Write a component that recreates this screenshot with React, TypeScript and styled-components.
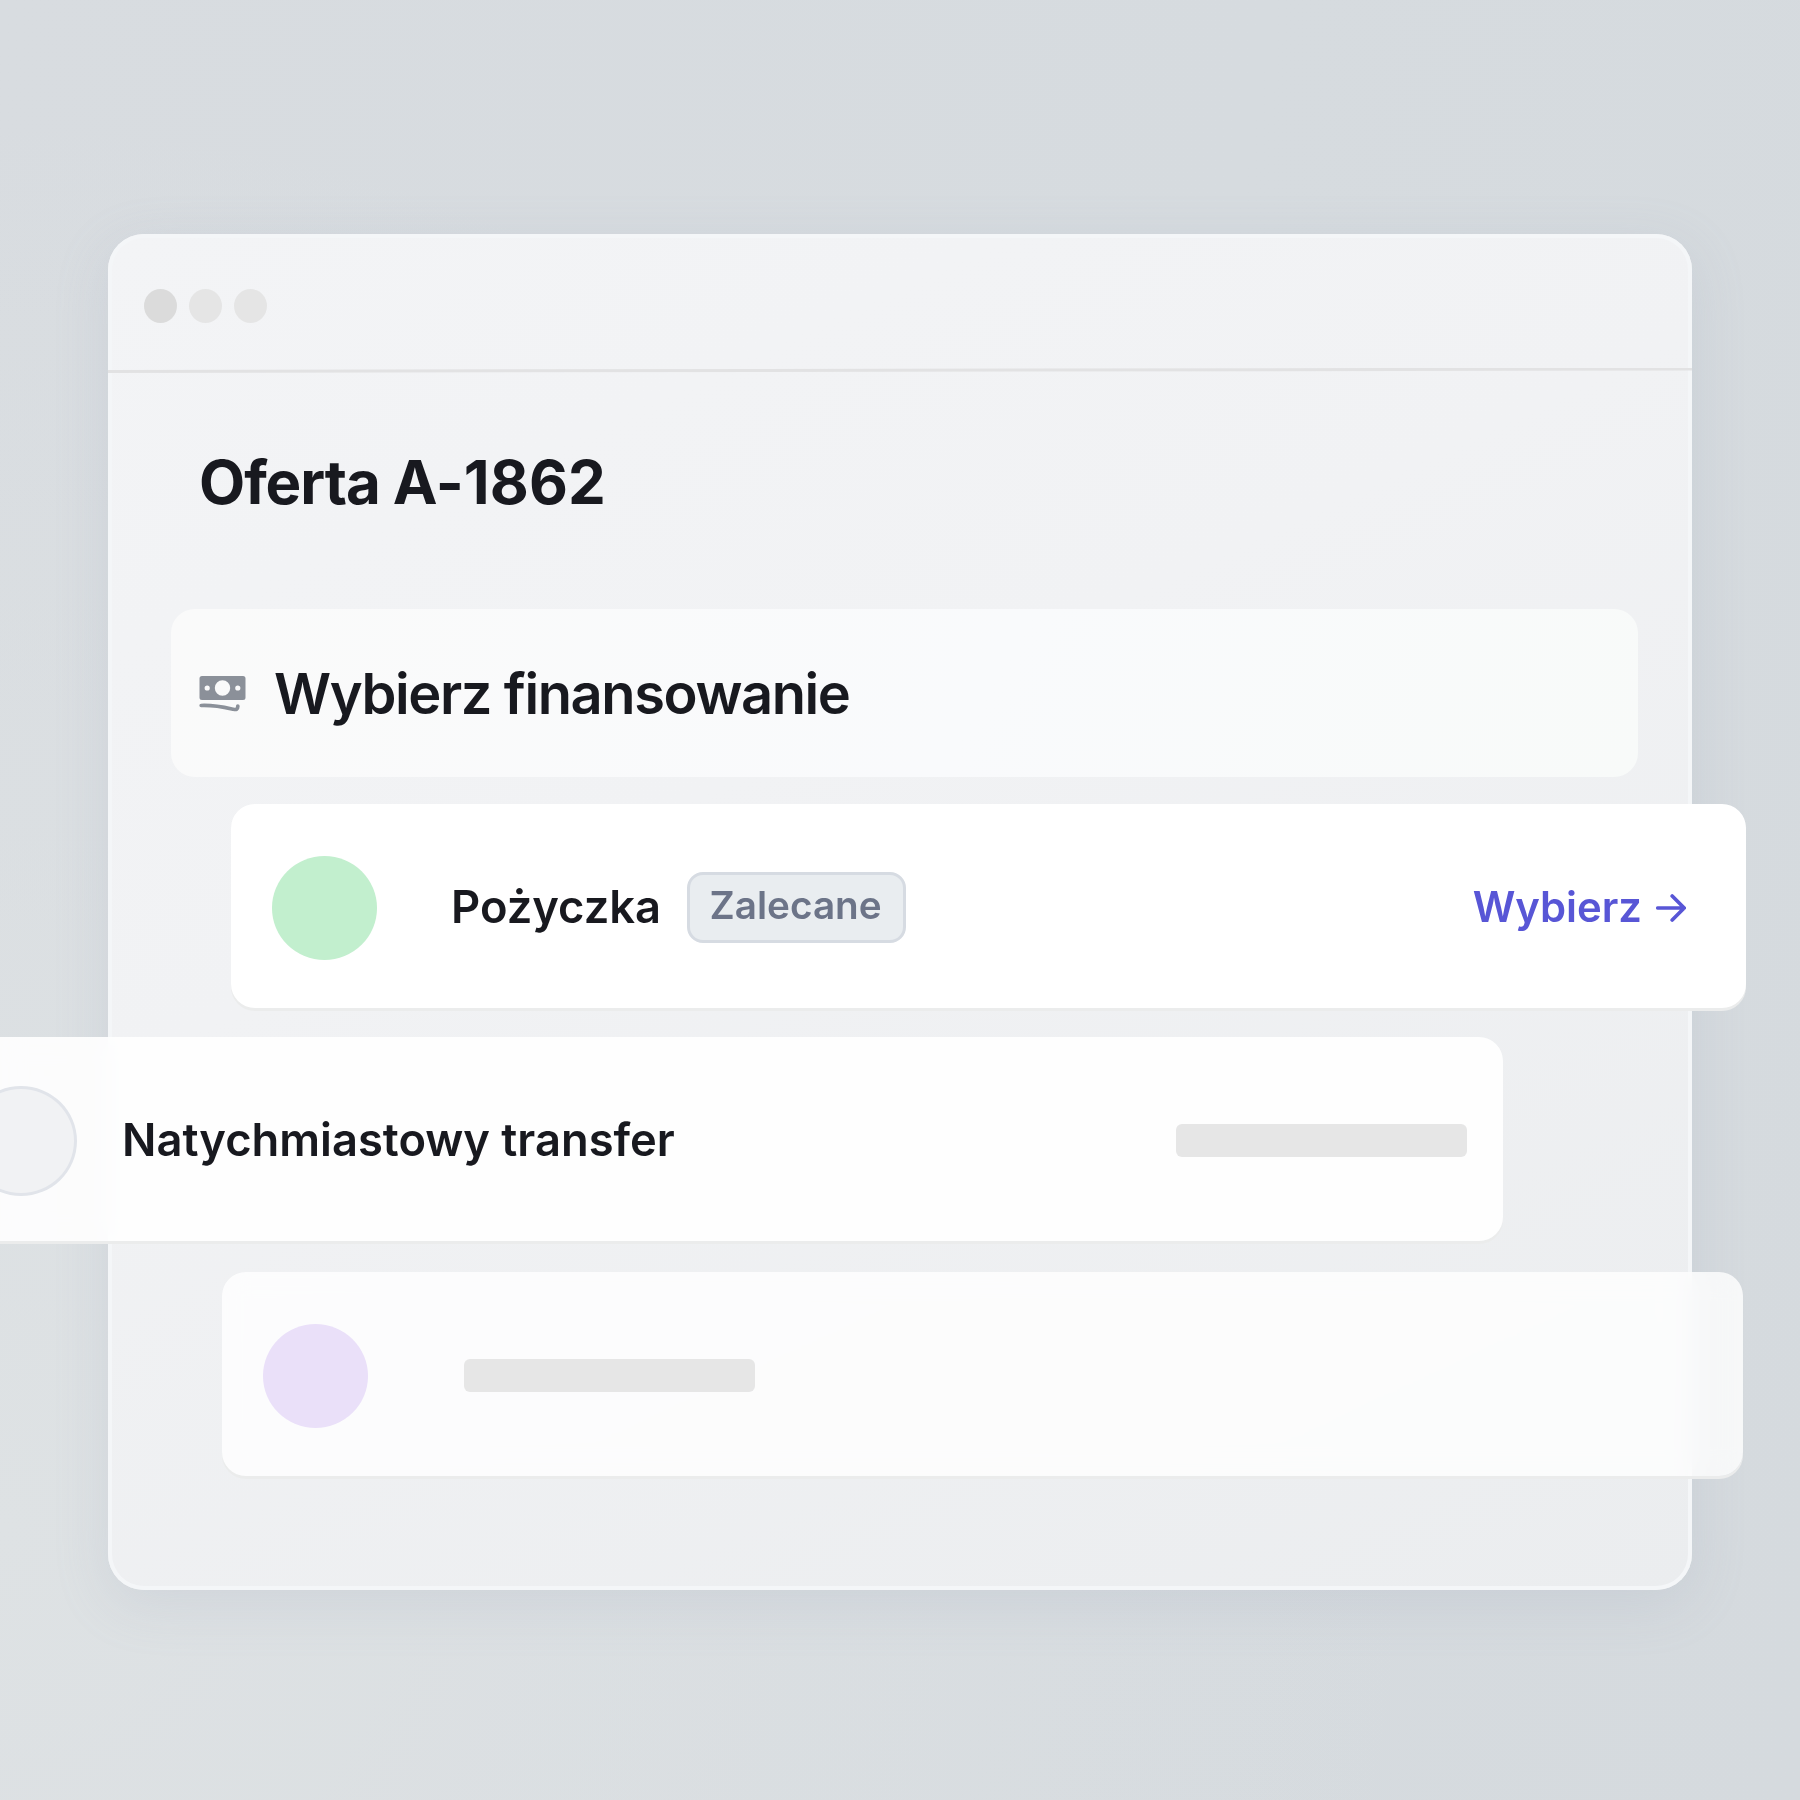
import React from 'react'
import styled, { createGlobalStyle } from 'styled-components'

const GlobalStyle = createGlobalStyle`
  * {
    box-sizing: border-box;
  }

  body {
    margin: 0;
    overflow: hidden;
    font-family: Inter, 'Liberation Sans', sans-serif;
    color: #18191f;
  }
`

const Page = styled.main`
  width: 1800px;
  height: 1800px;
  padding: 234px 108px 0;
  overflow: hidden;
  background:
    radial-gradient(circle at 0% 85%, #dee2e4 0%, rgba(222, 226, 228, 0) 60%),
    linear-gradient(100deg, #d8dce0 0%, #d6dbdf 60%, #d5dade 100%);
`

const Window = styled.section`
  display: flex;
  flex-direction: column;
  width: 1584px;
  height: 1356px;
  border-radius: 36px;
  background: linear-gradient(155deg, #f3f4f6 0%, #f1f2f4 40%, #ebedef 100%);
  box-shadow:
    inset 0 0 0 4px #f4f6f8,
    0 14px 54px rgba(150, 160, 182, 0.19);
`

const TitleBar = styled.header`
  display: flex;
  gap: 12px;
  height: 134px;
  padding: 55px 36px 0;
`

const Dot = styled.span<{ $active?: boolean }>`
  width: 33px;
  height: 34px;
  border-radius: 50%;
  background: ${({ $active }) => ($active ? '#dbdbdb' : '#e5e5e5')};
`

const Divider = styled.svg`
  display: block;
  width: 1584px;
  height: 6px;
`

const Title = styled.h1`
  margin: 72px 0 0 91px;
  font-size: 60px;
  line-height: 73px;
  font-weight: 700;
  letter-spacing: -1.1px;
`

const OfferCode = styled.span`
  letter-spacing: 0.1px;
`

const Panel = styled.div`
  display: flex;
  align-items: center;
  gap: 28px;
  width: 1467px;
  height: 168px;
  margin: 90px 0 27px 63px;
  padding: 2px 0 0 28px;
  border-radius: 24px;
  background: linear-gradient(120deg, #fafafa 0%, #f9fafc 55%, #f8faf9 100%);
`

const PanelTitle = styled.h2`
  margin: 0;
  font-size: 56px;
  line-height: 68px;
  font-weight: 600;
  letter-spacing: -1.4px;
`

const Row = styled.div<{ $offset: number; $width: number; $opacity: number; $top?: number }>`
  display: flex;
  flex-shrink: 0;
  align-items: center;
  width: ${({ $width }) => $width}px;
  height: 204px;
  margin-top: ${({ $top = 0 }) => $top}px;
  margin-left: ${({ $offset }) => $offset}px;
  padding-top: 3px;
  border-radius: 24px;
  background: rgba(255, 255, 255, ${({ $opacity }) => $opacity});
  box-shadow: 0 3px 0 #ebecec;
  backdrop-filter: blur(12px);
`

const Avatar = styled.div<{ $color: string }>`
  width: 105.5px;
  height: 104px;
  margin-left: 40.5px;
  border-radius: 50%;
  background: ${({ $color }) => $color};
`

const OutlinedAvatar = styled.div`
  width: 112px;
  height: 110px;
  margin-left: 40px;
  border: 3px solid #e1e4ea;
  border-radius: 50%;
  background: #f1f2f4;
`

const RowLabel = styled.span<{ $gap: number }>`
  margin-left: ${({ $gap }) => $gap}px;
  padding-bottom: 2px;
  font-size: 45.3px;
  line-height: 56px;
  font-weight: 600;
  white-space: nowrap;
`

const Badge = styled.span`
  display: flex;
  align-items: center;
  justify-content: center;
  width: 219px;
  height: 71px;
  margin-left: 26px;
  padding: 0 2px 5px 0;
  border: 3px solid #d6dbe2;
  border-radius: 16px;
  background: #e9edf0;
  color: #6c7488;
  font-size: 38.7px;
  font-weight: 600;
`

const SelectLink = styled.a`
  display: flex;
  align-items: center;
  gap: 14px;
  margin: 0 60px 0 auto;
  color: #5856d6;
  font-size: 41.8px;
  line-height: 50px;
  font-weight: 600;
`

const LinkLabel = styled.span`
  padding-bottom: 1px;
`

const Skeleton = styled.div<{ $left: string; $right?: number }>`
  width: 291px;
  height: 33px;
  margin: 0 ${({ $right = 0 }) => $right}px 0 ${({ $left }) => $left};
  border-radius: 6px;
  background: #e6e6e6;
`

const CashIcon: React.FC = () => (
  <svg width="47" height="38" viewBox="0 0 47 38">
    <path
      fillRule="evenodd"
      fill="#8b9099"
      d="M3 1h41a2.5 2.5 0 0 1 2.5 2.5v19A2.5 2.5 0 0 1 44 25H3a2.5 2.5 0 0 1-2.5-2.5v-19A2.5 2.5 0 0 1 3 1Zm20.5 4.300a7.700 7.700 0 1 0 0 15.400 7.700 7.700 0 0 0 0-15.400ZM8.200 10.400a2.600 2.600 0 1 0 0 5.200 2.600 2.600 0 0 0 0-5.200Zm30.600 0a2.600 2.600 0 1 0 0 5.200 2.600 2.600 0 0 0 0-5.200Z"
    />
    <path
      d="M2.200 30.500c14-.5 22 1.500 32.300 3.800 2.700.7 4.300-.3 4.300-2.800V31"
      fill="none"
      stroke="#8b9099"
      strokeWidth="3.700"
      strokeLinecap="round"
    />
  </svg>
)

const ArrowIcon: React.FC = () => (
  <svg width="30" height="28" viewBox="0 0 30 28">
    <path
      d="M1.800 14h26.200M16.200 2l12 12-12 12"
      fill="none"
      stroke="currentColor"
      strokeWidth="3.700"
      strokeLinecap="round"
      strokeLinejoin="round"
    />
  </svg>
)

const App: React.FC = () => {
  return (
    <>
      <GlobalStyle />
      <Page>
        <Window>
          <TitleBar>
            <Dot $active />
            <Dot />
            <Dot />
          </TitleBar>
          <Divider>
            <line x1="0" y1="3.5" x2="1584" y2="1" stroke="#e2e2e3" strokeWidth="3" />
          </Divider>
          <Title>
            Oferta <OfferCode>A-1862</OfferCode>
          </Title>
          <Panel>
            <CashIcon />
            <PanelTitle>Wybierz finansowanie</PanelTitle>
          </Panel>
          <Row $offset={123} $width={1515} $opacity={1}>
            <Avatar $color="#c2efce" />
            <RowLabel $gap={74}>Pożyczka</RowLabel>
            <Badge>Zalecane</Badge>
            <SelectLink>
              <LinkLabel>Wybierz</LinkLabel>
              <ArrowIcon />
            </SelectLink>
          </Row>
          <Row $offset={-183} $width={1578} $opacity={0.9} $top={29}>
            <OutlinedAvatar />
            <RowLabel $gap={45}>Natychmiastowy transfer</RowLabel>
            <Skeleton $left="auto" $right={36} />
          </Row>
          <Row $offset={114} $width={1521} $opacity={0.8} $top={31}>
            <Avatar $color="#eae0f9" />
            <Skeleton $left="96px" />
          </Row>
        </Window>
      </Page>
    </>
  )
}

export default App
